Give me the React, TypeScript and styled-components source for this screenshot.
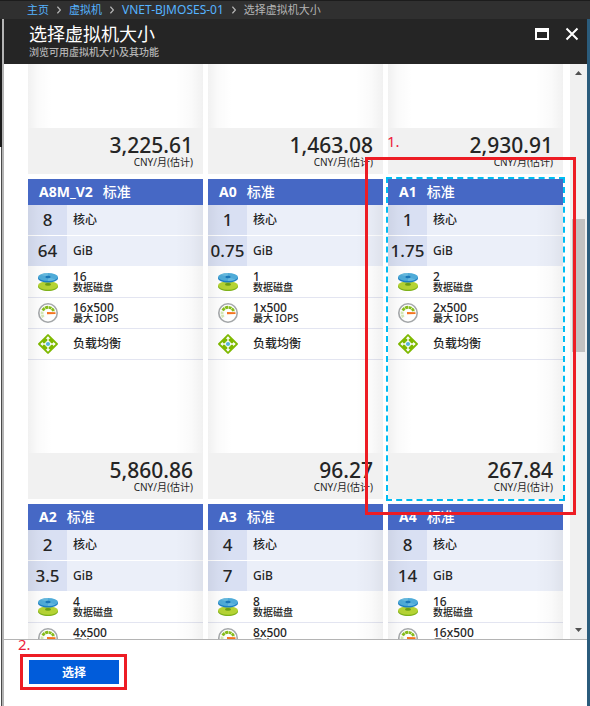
import React from "react";
import styled, { createGlobalStyle, css } from "styled-components";

const GlobalStyle = createGlobalStyle`
  *, *::before, *::after { box-sizing: border-box; }
  html, body, #root { height: 100%; }
  body {
    margin: 0;
    background: #fff;
    color: #252525;
    font-family: "Noto Sans", "Noto Sans CJK SC", sans-serif;
    font-size: 12px;
  }
`;

const Page = styled.div`
  display: flex;
  flex-direction: column;
  height: 100vh;
  overflow: hidden;
`;

const Breadcrumb = styled.nav`
  flex: none;
  display: flex;
  align-items: center;
  gap: 8px;
  height: 19px;
  padding-left: 27px;
  border-top: 1px solid #1c1c1c;
  background: #303030;
  color: #b4b4b4;
  font-size: 11px;
  line-height: 18px;
  white-space: nowrap;

  svg { flex: none; }
`;

const Crumb = styled.a<{ $latin?: boolean }>`
  color: #55b3ff;
  font-size: ${(p) => (p.$latin ? 12 : 11)}px;
  text-decoration: none;
`;

const Workspace = styled.div`
  flex: 1;
  min-height: 0;
  display: flex;
`;

const LeftEdge = styled.div`
  flex: none;
  width: 4px;
  background: linear-gradient(#1b1b1b, #1b1b1b) 0 0 / 2px 128px no-repeat,
    linear-gradient(to right, #fff 1px, #4a4a4a 1px, #4a4a4a 2px, #b4b4b4 2px);
`;

const RightEdge = styled.div`
  flex: none;
  width: 3px;
  background: #2b5c7c;
`;

const Blade = styled.main`
  flex: 1;
  min-width: 0;
  display: flex;
  flex-direction: column;
`;

const BladeHeader = styled.header`
  flex: none;
  display: flex;
  justify-content: space-between;
  align-items: flex-start;
  height: 45px;
  padding: 3px 8px 0 25px;
  background: #252525;
  color: #fff;
`;

const Title = styled.h1`
  margin: 0;
  font-size: 18px;
  font-weight: 400;
  line-height: 24px;
`;

const Subtitle = styled.p`
  margin: 0;
  color: #b4b4b4;
  font-size: 10px;
  font-weight: 500;
  line-height: 12px;
`;

const WindowActions = styled.div`
  display: flex;
  gap: 16px;
  padding-top: 5px;
`;

const IconButton = styled.button`
  display: flex;
  padding: 0;
  border: 0;
  background: none;
  color: #fff;
`;

const Viewport = styled.section`
  flex: 1;
  min-height: 0;
  display: flex;
  align-items: flex-start;
  overflow: hidden;
  background: #fff;
`;

const CardGrid = styled.div`
  flex: 1;
  min-width: 0;
  display: grid;
  grid-template-columns: repeat(3, minmax(0, 1fr));
  gap: 5px;
  padding: 0 7px 0 24px;
`;

const ScrollTrack = styled.div`
  flex: none;
  align-self: stretch;
  width: 17px;
  display: flex;
  flex-direction: column;
  align-items: center;
  justify-content: space-between;
  padding: 7px 0;
  background: #f0f0f0;
`;

const ScrollThumb = styled.div`
  width: 13px;
  height: 133px;
  margin: 144px 0 auto;
  background: #c1c1c1;
`;

const Card = styled.article<{ $selected?: boolean; $partial?: boolean }>`
  position: relative;
  display: flex;
  flex-direction: column;
  height: ${(p) => (p.$partial ? 110 : 320)}px;
  ${(p) =>
    p.$selected &&
    css`
      z-index: 1;
      outline: 2px dashed #00bcf2;
    `}
`;

const CardTitle = styled.h2`
  flex: none;
  display: flex;
  gap: 10px;
  margin: 0;
  padding-left: 11px;
  background: #4668c5;
  color: #fff;
  font-size: 14px;
  font-weight: 700;
  line-height: 26px;

  span { font-weight: 500; }
`;

const CardBody = styled.div`
  flex: 1;
  background-color: #fff;
  position: relative;

  &::after {
    content: "";
    position: absolute;
    inset: 0;
    pointer-events: none;
    background: linear-gradient(
      to right,
      rgba(0, 0, 0, 0.055),
      rgba(0, 0, 0, 0.02) 10px,
      transparent 24px,
      transparent calc(100% - 28px),
      rgba(0, 0, 0, 0.02) calc(100% - 12px),
      rgba(0, 0, 0, 0.055)
    );
  }
`;

const SpecRow = styled.div`
  display: grid;
  grid-template-columns: 39px 1fr;
  height: 30px;
  line-height: 30px;
  background: #ebeff9;

  & + & { margin-top: 1px; }
`;

const SpecValue = styled.strong`
  display: flex;
  justify-content: center;
  background: #d9e0f3;
  font-size: 17px;
  font-weight: 500;
  white-space: nowrap;
`;

const SpecUnit = styled.span`
  padding-left: 6px;
  font-weight: 500;
`;

const FeatureList = styled.div`
  padding-top: 1px;
`;

const FeatureRow = styled.div`
  display: grid;
  grid-template-columns: 39px 1fr;
  align-items: center;
  height: 31px;
  border-bottom: 1px solid #e3e5f1;

  svg { justify-self: center; }
`;

const FeatureText = styled.div`
  padding-left: 6px;
  font-weight: 500;
  line-height: 12px;

  small {
    display: block;
    margin: -1px 0 2px;
    font-size: 10px;
    line-height: 10px;
  }
`;

const Price = styled.footer`
  flex: none;
  height: 46px;
  padding: 5px 10px 0 0;
  background: #f1f1f1;
  text-align: right;
  font-size: 21px;
  font-weight: 500;
  line-height: 24px;

  small {
    display: block;
    font-size: 10px;
    font-weight: 400;
    line-height: 11px;
  }
`;

const Footer = styled.footer`
  flex: none;
  height: 67px;
  padding: 20px 25px 0;
  border-top: 1px solid #b4b4b4;
`;

const ButtonHolder = styled.div`
  position: relative;
  width: 90px;
`;

const SelectButton = styled.button`
  display: block;
  width: 100%;
  height: 24px;
  padding: 0;
  border: 0;
  background: #015cda;
  color: #fff;
  font: inherit;
  font-weight: 700;
`;

const MarkBox = styled.div<{ $inset: string }>`
  position: absolute;
  inset: ${(p) => p.$inset};
  border: 3px solid #ed1c24;
  pointer-events: none;
`;

const MarkLabel = styled.span<{ $top: number; $left: number }>`
  position: absolute;
  top: ${(p) => p.$top}px;
  left: ${(p) => p.$left}px;
  color: #ed1c3c;
  font-size: 15px;
  line-height: 20px;
`;

const Chevron = () => (
  <svg width="4" height="8" viewBox="0 0 4 8" fill="none" stroke="#b4b4b4" strokeWidth="1.3">
    <path d="M.4.7 3.400 4 .4 7.300" />
  </svg>
);

const DiskIcon = () => (
  <svg width="20" height="18" viewBox="0 0 20 18">
    <path d="M0 12.500v1C0 16 4.500 18 10 18s10-2 10-4.500v-1z" fill="#7fb21a" />
    <ellipse cx="10" cy="12.500" rx="10" ry="4.200" fill="#b5d334" />
    <ellipse cx="10" cy="11.400" rx="3" ry="1.300" fill="#6c9e13" />
    <path d="M0 4v1.200c0 2.300 4.500 4.300 10 4.300s10-2 10-4.300V4z" fill="#1c7fc4" />
    <ellipse cx="10" cy="4" rx="10" ry="4" fill="#4fabd8" />
    <path d="M10 4 2.500 1.700C4 .6 7 0 10 0zM10 4l7.500 2.400C16 7.400 13 8 10 8z" fill="#7cc5e3" opacity=".5" />
    <ellipse cx="10" cy="4" rx="2.700" ry="1.200" fill="#1976b8" />
  </svg>
);

const GaugeIcon = () => (
  <svg width="20" height="20" viewBox="0 0 20 20" fill="none">
    <circle cx="10" cy="10" r="9.200" fill="#fff" stroke="#a5a8aa" strokeWidth="1.600" />
    <path d="M5.500 14.200A6 6 0 0 1 4.400 8.200" stroke="#d5e8b4" strokeWidth="2.800" strokeDasharray="2.600 .6" />
    <path d="M4.700 7.500A6 6 0 0 1 15.800 8.600" stroke="#86bd1c" strokeWidth="2.800" strokeDasharray="3 .5" />
    <path d="m9 9 8.500.2v1.800L9 11.200z" fill="#f5741f" />
  </svg>
);

const BalanceIcon = () => (
  <svg width="20" height="20" viewBox="0 0 20 20" fill="none">
    <rect x="2.700" y="2.700" width="14.600" height="14.600" rx="1" transform="rotate(45 10 10)" fill="#7fba00" />
    <path d="M10 4v12M4 10h12" stroke="#fff" strokeWidth="1.400" />
    <path d="m10 2.300 2.300 2.500H7.700zM10 17.700l-2.300-2.500h4.600zM2.300 10l2.500-2.300v4.600zM17.700 10l-2.500 2.300V7.700z" fill="#fff" />
    <circle cx="10" cy="10" r="2.900" fill="#fff" />
    <circle cx="10" cy="10" r="2.100" fill="#59b4d9" />
  </svg>
);

const Arrow = ({ down = false }: { down?: boolean }) => (
  <svg width="7" height="4" viewBox="0 0 7 4">
    <path d={down ? "M0 0h7L3.500 4z" : "M0 4h7L3.500 0z"} fill="#505050" />
  </svg>
);

interface Size {
  name: string;
  cores: string;
  memory: string;
  disks: string;
  price: string;
}

const partialPrices = ["3,225.61", "1,463.08", "2,930.91"];

const sizes: Size[] = [
  { name: "A8M_V2", cores: "8", memory: "64", disks: "16", price: "5,860.86" },
  { name: "A0", cores: "1", memory: "0.75", disks: "1", price: "96.27" },
  { name: "A1", cores: "1", memory: "1.75", disks: "2", price: "267.84" },
  { name: "A2", cores: "2", memory: "3.5", disks: "4", price: "" },
  { name: "A3", cores: "4", memory: "7", disks: "8", price: "" },
  { name: "A4", cores: "8", memory: "14", disks: "16", price: "" },
];

const PriceBlock = ({ value }: { value: string }) => (
  <Price>
    {value}
    <small>CNY/月(估计)</small>
  </Price>
);

const SizeCard = ({ size, selected }: { size: Size; selected: boolean }) => (
  <Card $selected={selected}>
    <CardTitle>
      {size.name} <span>标准</span>
    </CardTitle>
    <CardBody>
      <SpecRow>
        <SpecValue>{size.cores}</SpecValue>
        <SpecUnit>核心</SpecUnit>
      </SpecRow>
      <SpecRow>
        <SpecValue>{size.memory}</SpecValue>
        <SpecUnit>GiB</SpecUnit>
      </SpecRow>
      <FeatureList>
        <FeatureRow>
          <DiskIcon />
          <FeatureText>
            {size.disks}
            <small>数据磁盘</small>
          </FeatureText>
        </FeatureRow>
        <FeatureRow>
          <GaugeIcon />
          <FeatureText>
            {size.disks}x500
            <small>最大 IOPS</small>
          </FeatureText>
        </FeatureRow>
        <FeatureRow>
          <BalanceIcon />
          <FeatureText>负载均衡</FeatureText>
        </FeatureRow>
      </FeatureList>
    </CardBody>
    {size.price && <PriceBlock value={size.price} />}
    {selected && (
      <>
        <MarkBox $inset="-22px -13px -16px -23px" />
        <MarkLabel $top={-48} $left={-1}>1.</MarkLabel>
      </>
    )}
  </Card>
);

export default function App() {
  return (
    <>
      <GlobalStyle />
      <Page>
        <Breadcrumb>
          <Crumb href="#home">主页</Crumb>
          <Chevron />
          <Crumb href="#vms">虚拟机</Crumb>
          <Chevron />
          <Crumb href="#vnet" $latin>VNET-BJMOSES-01</Crumb>
          <Chevron />
          <span>选择虚拟机大小</span>
        </Breadcrumb>
        <Workspace>
          <LeftEdge />
          <Blade>
            <BladeHeader>
              <div>
                <Title>选择虚拟机大小</Title>
                <Subtitle>浏览可用虚拟机大小及其功能</Subtitle>
              </div>
              <WindowActions>
                <IconButton aria-label="最大化">
                  <svg width="14" height="14" viewBox="0 0 14 14">
                    <path d="M0 1h14v12H0zM2 5v6h10V5z" fill="currentColor" fillRule="evenodd" />
                  </svg>
                </IconButton>
                <IconButton aria-label="关闭">
                  <svg width="14" height="14" viewBox="0 0 14 14">
                    <path d="m1.500 1.500 11 11m0-11-11 11" stroke="currentColor" strokeWidth="2" />
                  </svg>
                </IconButton>
              </WindowActions>
            </BladeHeader>
            <Viewport>
              <CardGrid>
                {partialPrices.map((price) => (
                  <Card key={price} $partial>
                    <CardBody />
                    <PriceBlock value={price} />
                  </Card>
                ))}
                {sizes.map((size) => (
                  <SizeCard key={size.name} size={size} selected={size.name === "A1"} />
                ))}
              </CardGrid>
              <ScrollTrack>
                <Arrow />
                <ScrollThumb />
                <Arrow down />
              </ScrollTrack>
            </Viewport>
            <Footer>
              <ButtonHolder>
                <SelectButton type="button">选择</SelectButton>
                <MarkBox $inset="-6px -8px -6px -9px" />
                <MarkLabel $top={-26} $left={-11}>2.</MarkLabel>
              </ButtonHolder>
            </Footer>
          </Blade>
          <RightEdge />
        </Workspace>
      </Page>
    </>
  );
}
